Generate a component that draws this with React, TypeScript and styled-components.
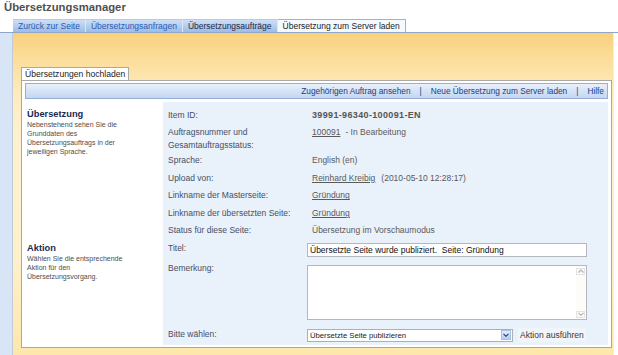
import React from 'react';
import styled, { createGlobalStyle } from 'styled-components';

const GlobalStyle = createGlobalStyle`
  html, body {
    margin: 0;
    padding: 0;
    background: #fff;
  }
  body {
    font-family: "Liberation Sans", Arial, sans-serif;
  }
  * {
    box-sizing: border-box;
  }
`;

const Page = styled.div`
  width: 618px;
  height: 355px;
  overflow: hidden;
  display: flex;
  flex-direction: column;
  background: #fff;
`;

const Title = styled.h1`
  margin: 0;
  height: 19px;
  padding-left: 4px;
  font-size: 11.3px;
  line-height: 15px;
  font-weight: bold;
  color: #4f4f4f;
`;

const TabBar = styled.div`
  display: flex;
  height: 14px;
  padding-left: 13px;
  border-bottom: 1px solid #8fa6c8;
`;

const Tab = styled.div<{ $active?: boolean; $dark?: boolean }>`
  height: 13px;
  display: flex;
  align-items: center;
  padding: 0 5px;
  font-size: 8.5px;
  white-space: nowrap;
  color: ${(p) => (p.$active ? '#1c1c1c' : p.$dark ? '#1b2a48' : '#2b5cb3')};
  background: ${(p) => (p.$active ? '#f6f9fe' : 'linear-gradient(#cddff6, #9dbce8)')};
  border-top: 1px solid ${(p) => (p.$active ? '#9db2d3' : '#b4cbeb')};
  border-right: 1px solid ${(p) => (p.$active ? '#9db2d3' : '#dbe7f8')};
`;

const Body = styled.div`
  flex: 1;
  display: flex;
`;

const SideStrip = styled.div`
  width: 12px;
  background: #d8e5f7;
`;

const Stage = styled.div`
  flex: 1;
  display: flex;
  flex-direction: column;
  align-items: flex-start;
  padding: 34px 1px 0 8px;
  border-left: 1px solid #c0cbd9;
  border-right: 1px solid #fbeec9;
  background: linear-gradient(180deg, #f9d07e 0%, #fcdf9e 9%, #feecc0 20%, #fff1d0 32%, #fff0cc 70%, #fde7ab 100%);
`;

const RightGap = styled.div`
  width: 4px;
  background: #fff;
`;

const SubTab = styled.div`
  height: 13px;
  display: flex;
  align-items: center;
  padding: 0 3px;
  font-size: 8.6px;
  color: #222;
  background: #fff;
  border: 1px solid #a8a8a8;
  border-bottom: none;
`;

const Panel = styled.div`
  width: 591px;
  padding: 2px 3px;
  background: #fff;
  border: 1px solid #a8a8a8;
`;

const Toolbar = styled.div`
  height: 16px;
  display: flex;
  justify-content: flex-end;
  align-items: center;
  padding-right: 3px;
  font-size: 8.3px;
  color: #1f3c7c;
  border: 1px solid #97afd5;
  background: linear-gradient(#e8f0fb, #c3d6f1);
`;

const ToolLink = styled.a`
  color: #1f3c7c;
  text-decoration: none;
  white-space: nowrap;
`;

const Sep = styled.span`
  margin: 0 9px;
`;

const Content = styled.div`
  margin-top: 3px;
  display: flex;
  flex-direction: column;
`;

const Section = styled.div<{ $pt: number }>`
  display: flex;
  & > div:last-child {
    padding-top: ${(p) => p.$pt}px;
  }
`;

const Desc = styled.div<{ $pt: number }>`
  width: 138px;
  padding: ${(p) => p.$pt}px 0 0 2px;
`;

const DescTitle = styled.div`
  font-size: 9.3px;
  line-height: 11px;
  font-weight: bold;
  color: #1b2a52;
`;

const DescText = styled.div`
  width: 106px;
  font-size: 7px;
  line-height: 9.3px;
  color: #4d4d4d;
`;

const Fields = styled.div`
  flex: 1;
  background: #e9f1fb;
`;

const Row = styled.div<{ $h: number }>`
  height: ${(p) => p.$h}px;
  display: flex;
  align-items: flex-start;
`;

const Label = styled.div`
  width: 144px;
  padding: 2.5px 0 0 5px;
  font-size: 8.5px;
  line-height: 13px;
  color: #465066;
`;

const Value = styled.div<{ $bold?: boolean }>`
  padding: 2.5px 0 0 5px;
  font-size: ${(p) => (p.$bold ? '9px' : '8.5px')};
  font-weight: ${(p) => (p.$bold ? 'bold' : 'normal')};
  letter-spacing: ${(p) => (p.$bold ? '0.35px' : 'normal')};
  line-height: 13px;
  color: ${(p) => (p.$bold ? '#555' : '#5a5a5a')};
  white-space: nowrap;
`;

const ValLink = styled.a<{ $gap?: number }>`
  color: #5a5a5a;
  text-decoration: underline;
  margin-right: ${(p) => p.$gap ?? 0}px;
`;

const TextBox = styled.input`
  width: 280px;
  height: 14px;
  margin-top: 3.5px;
  padding: 0 2px;
  font-family: "Liberation Sans", Arial, sans-serif;
  font-size: 8.5px;
  color: #111;
  background: #fff;
  border: 1px solid #b4b7bc;
  outline: none;
`;

const MemoBox = styled.div`
  width: 280px;
  height: 55px;
  margin-top: 5px;
  display: flex;
  background: #fff;
  border: 1px solid #b4b7bc;
`;

const MemoArea = styled.textarea`
  flex: 1;
  border: none;
  resize: none;
  outline: none;
  background: transparent;
  font-family: "Liberation Sans", Arial, sans-serif;
  font-size: 8.5px;
`;

const ScrollTrack = styled.div`
  width: 10px;
  display: flex;
  flex-direction: column;
  justify-content: space-between;
  padding: 2px 1px 1px 0;
  background: #fdfcf8;
`;

const ScrollBtn = styled.div`
  width: 9px;
  height: 7px;
  display: flex;
  align-items: center;
  justify-content: center;
  border: 1px solid #e3e3e3;
  background: #fafafa;
`;

const SelectBox = styled.div`
  width: 206px;
  height: 13px;
  margin-top: 3px;
  display: flex;
  align-items: center;
  padding: 0 1px 0 2px;
  background: #fff;
  border: 1px solid #a9b0ba;
`;

const SelectText = styled.span`
  flex: 1;
  font-size: 7.7px;
  color: #222;
`;

const DropBtn = styled.span`
  width: 10px;
  height: 10px;
  display: flex;
  align-items: center;
  justify-content: center;
  border: 1px solid #a9c0e2;
  background: linear-gradient(#e2ecfa, #b6cdee);
`;

const ActionButton = styled.button`
  height: 14px;
  margin: 2.5px 0 0 5px;
  padding: 0 2px;
  font-family: "Liberation Sans", Arial, sans-serif;
  font-size: 8.5px;
  color: #383838;
  background: #f1f4f9;
  border: none;
`;

const Chevron = ({ up, color }: { up?: boolean; color: string }) => (
  <svg width="6" height="4" viewBox="0 0 6 4">
    <path d={up ? 'M0.5 3.5 L3 1 L5.5 3.5' : 'M0.5 0.8 L3 3.3 L5.5 0.8'} fill="none" stroke={color} strokeWidth="1.1" />
  </svg>
);

export default function App() {
  return (
    <>
      <GlobalStyle />
      <Page>
        <Title>Übersetzungsmanager</Title>
        <TabBar>
          <Tab>Zurück zur Seite</Tab>
          <Tab>Übersetzungsanfragen</Tab>
          <Tab $dark>Übersetzungsaufträge</Tab>
          <Tab $active>Übersetzung zum Server laden</Tab>
        </TabBar>
        <Body>
          <SideStrip />
          <Stage>
            <SubTab>Übersetzungen hochladen</SubTab>
            <Panel>
              <Toolbar>
                <ToolLink>Zugehörigen Auftrag ansehen</ToolLink>
                <Sep>|</Sep>
                <ToolLink>Neue Übersetzung zum Server laden</ToolLink>
                <Sep>|</Sep>
                <ToolLink>Hilfe</ToolLink>
              </Toolbar>
              <Content>
                <Section $pt={4}>
                  <Desc $pt={6.5}>
                    <DescTitle>Übersetzung</DescTitle>
                    <DescText>
                      Nebenstehend sehen Sie die Grunddaten des Übersetzungsauftrags in der jeweiligen Sprache.
                    </DescText>
                  </Desc>
                  <Fields>
                    <Row $h={17.5}>
                      <Label>Item ID:</Label>
                      <Value $bold>39991-96340-100091-EN</Value>
                    </Row>
                    <Row $h={28.2}>
                      <Label>
                        Auftragsnummer und
                        <br />
                        Gesamtauftragsstatus:
                      </Label>
                      <Value>
                        <ValLink $gap={5}>100091</ValLink>- In Bearbeitung
                      </Value>
                    </Row>
                    <Row $h={17.6}>
                      <Label>Sprache:</Label>
                      <Value>English (en)</Value>
                    </Row>
                    <Row $h={17.7}>
                      <Label>Upload von:</Label>
                      <Value>
                        <ValLink $gap={6}>Reinhard Kreibig</ValLink>(2010-05-10 12:28:17)
                      </Value>
                    </Row>
                    <Row $h={17.7}>
                      <Label>Linkname der Masterseite:</Label>
                      <Value>
                        <ValLink>Gründung</ValLink>
                      </Value>
                    </Row>
                    <Row $h={17.3}>
                      <Label>Linkname der übersetzten Seite:</Label>
                      <Value>
                        <ValLink>Gründung</ValLink>
                      </Value>
                    </Row>
                    <Row $h={17.7}>
                      <Label>Status für diese Seite:</Label>
                      <Value>Übersetzung im Vorschaumodus</Value>
                    </Row>
                  </Fields>
                </Section>
                <Section $pt={0}>
                  <Desc $pt={3}>
                    <DescTitle>Aktion</DescTitle>
                    <DescText>Wählen Sie die entsprechende Aktion für den Übersetzungsvorgang.</DescText>
                  </Desc>
                  <Fields>
                    <Row $h={20.3}>
                      <Label>Titel:</Label>
                      <TextBox readOnly defaultValue="Übersetzte Seite wurde publiziert.  Seite: Gründung" />
                    </Row>
                    <Row $h={66}>
                      <Label>Bemerkung:</Label>
                      <MemoBox>
                        <MemoArea />
                        <ScrollTrack>
                          <ScrollBtn>
                            <Chevron up color="#aab3bf" />
                          </ScrollBtn>
                          <ScrollBtn>
                            <Chevron color="#aab3bf" />
                          </ScrollBtn>
                        </ScrollTrack>
                      </MemoBox>
                    </Row>
                    <Row $h={19}>
                      <Label>Bitte wählen:</Label>
                      <SelectBox>
                        <SelectText>Übersetzte Seite publizieren</SelectText>
                        <DropBtn>
                          <Chevron color="#1d3f86" />
                        </DropBtn>
                      </SelectBox>
                      <ActionButton>Aktion ausführen</ActionButton>
                    </Row>
                  </Fields>
                </Section>
              </Content>
            </Panel>
          </Stage>
          <RightGap />
        </Body>
      </Page>
    </>
  );
}
